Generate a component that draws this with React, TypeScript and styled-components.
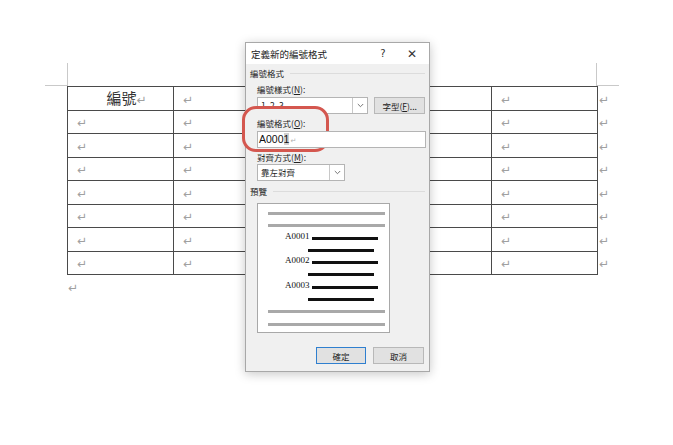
import React from "react";
import styled, { createGlobalStyle } from "styled-components";

const Global = createGlobalStyle`
  html, body { margin: 0; padding: 0; background: #ffffff; }
  body { width: 673px; height: 445px; overflow: hidden; font-family: "Noto Sans CJK TC", "Noto Sans", sans-serif; }
`;

const Page = styled.div`
  position: relative;
  width: 673px;
  height: 445px;
  background: #ffffff;
  padding-top: 63px;
  box-sizing: border-box;
`;

const MarkRow = styled.div`
  display: flex;
  height: 23px;
  margin-left: 45px;
`;

const MarkSide = styled.div`
  width: 22px;
  border-bottom: 1px solid #c9c9c9;
  box-sizing: border-box;
`;

const MarkMid = styled.div`
  width: 530px;
  border-left: 1px solid #c9c9c9;
  border-right: 1px solid #c9c9c9;
  box-sizing: border-box;
`;

const Table = styled.table`
  margin-left: 67px;
  border-collapse: collapse;
  table-layout: fixed;
  width: 540px;
`;

const Row = styled.tr`
  height: 23.5px;
`;

const Cell = styled.td<{ $center?: boolean }>`
  border: 1px solid #4a4a4a;
  padding: 0 0 0 ${(p) => (p.$center ? 12 : 9)}px;
  text-align: ${(p) => (p.$center ? "center" : "left")};
  vertical-align: middle;
  line-height: 14px;
`;

const EndCell = styled.td`
  border: none;
  padding: 0 0 0 1px;
  vertical-align: middle;
  line-height: 14px;
`;

const Mark = styled.span`
  color: #a0a0a0;
  font-family: "DejaVu Sans", sans-serif;
  font-size: 12px;
`;

const HeadText = styled.span`
  font-family: "Noto Sans CJK TC", sans-serif;
  font-weight: 400;
  font-size: 15px;
  color: #333;
`;

const AfterPara = styled.div`
  margin-left: 68px;
  margin-top: 3px;
  line-height: 14px;
`;

const Dialog = styled.div`
  position: absolute;
  left: 245px;
  top: 42px;
  width: 185px;
  height: 330px;
  box-sizing: border-box;
  background: #f0f0f0;
  border: 1px solid #a8a8a8;
  box-shadow: 0 2px 10px rgba(0, 0, 0, 0.22);
  display: flex;
  flex-direction: column;
  font-family: "Noto Sans CJK TC", "Noto Sans", sans-serif;
  color: #222;
`;

const TitleBar = styled.div`
  height: 21px;
  background: #ffffff;
  display: flex;
  align-items: center;
  padding-left: 5px;
  padding-right: 9px;
  font-size: 9.5px;
  flex-shrink: 0;
`;

const TitleText = styled.span`
  flex: 1;
`;

const TitleBtn = styled.span<{ $w: number; $size: number }>`
  width: ${(p) => p.$w}px;
  text-align: center;
  font-family: "DejaVu Sans", sans-serif;
  font-size: ${(p) => p.$size}px;
  color: #333;
`;

const TitleGap = styled.span`
  width: 13px;
`;

const Body = styled.div`
  display: flex;
  flex-direction: column;
  padding: 0 4px 0 4px;
  position: relative;
`;

const GroupLabel = styled.div<{ $mt: number }>`
  display: flex;
  align-items: center;
  gap: 6px;
  height: 12px;
  margin-top: ${(p) => p.$mt}px;
  font-size: 8.5px;
  &::after {
    content: "";
    flex: 1;
    border-top: 1px solid #dcdcdc;
  }
`;

const Indent = styled.div`
  padding-left: 7px;
  display: flex;
  flex-direction: column;
`;

const FieldLabel = styled.div<{ $mt: number; $top?: boolean }>`
  height: 12px;
  line-height: 12px;
  margin-top: ${(p) => p.$mt}px;
  font-size: 8.5px;
  position: ${(p) => (p.$top ? "relative" : "static")};
  z-index: ${(p) => (p.$top ? 3 : "auto")};
  u { text-decoration: underline; }
`;

const FieldRow = styled.div<{ $mt: number }>`
  display: flex;
  gap: 6px;
  margin-top: ${(p) => p.$mt}px;
  height: 17px;
`;

const Select = styled.div<{ $w: number }>`
  width: ${(p) => p.$w}px;
  height: 17px;
  box-sizing: border-box;
  display: flex;
  background: #ffffff;
  border: 1px solid #b4b4b4;
`;

const SelectText = styled.div`
  flex: 1;
  font-size: 8.5px;
  line-height: 15px;
  padding-left: 3px;
  font-family: "Noto Sans CJK TC", sans-serif;
`;

const SelectArrow = styled.div`
  width: 14px;
  border-left: 1px solid #c8c8c8;
  display: flex;
  align-items: center;
  justify-content: center;
`;

const Button = styled.div<{ $w: number; $focus?: boolean }>`
  width: ${(p) => p.$w}px;
  height: 17px;
  box-sizing: border-box;
  background: #e1e1e1;
  border: 1px solid ${(p) => (p.$focus ? "#2f7fcf" : "#b8b8b8")};
  font-size: 8.5px;
  display: flex;
  align-items: center;
  justify-content: center;
`;

const Input = styled.div`
  position: relative;
  z-index: 3;
  margin-top: 2px;
  height: 17px;
  width: 169px;
  box-sizing: border-box;
  background: #ffffff;
  border: 1px solid #b4b4b4;
  font-family: "Liberation Sans", sans-serif;
  font-size: 10.5px;
  line-height: 15px;
  padding-left: 1px;
  color: #111;
`;

const Caret = styled.span`
  background: #d0d0d0;
`;

const InputMark = styled.span`
  color: #b0b0b0;
  font-family: "DejaVu Sans", sans-serif;
  font-size: 7px;
  margin-left: 1px;
`;

const Highlight = styled.div`
  position: absolute;
  left: -4px;
  top: 42px;
  width: 87px;
  height: 46px;
  box-sizing: border-box;
  border: 3px solid #d4574f;
  border-radius: 14px;
  background: #f0f0f0;
  z-index: 2;
`;

const Preview = styled.div`
  margin-top: 6px;
  width: 133px;
  height: 130px;
  box-sizing: border-box;
  background: #ffffff;
  border: 1px solid #a8a8a8;
  display: flex;
  flex-direction: column;
  padding: 0 0 0 10px;
`;

const GrayLine = styled.div<{ $mt: number }>`
  width: 117px;
  height: 3px;
  flex-shrink: 0;
  background: #a9a9a9;
  margin-top: ${(p) => p.$mt}px;
`;

const Entry = styled.div`
  display: flex;
  align-items: center;
  margin-top: 9.3px;
  padding-left: 17px;
  height: 3px;
  flex-shrink: 0;
`;

const EntryNum = styled.span`
  font-family: "Liberation Serif", serif;
  font-size: 9px;
  line-height: 3px;
  width: 27px;
  color: #111;
  transform: translateY(-2px);
`;

const BlackLine = styled.div`
  width: 66px;
  height: 3px;
  background: #111;
`;

const SubLine = styled.div`
  width: 66px;
  height: 3px;
  flex-shrink: 0;
  background: #111;
  margin-left: 40px;
  margin-top: 9.3px;
`;

const Footer = styled.div`
  display: flex;
  justify-content: flex-end;
  gap: 7px;
  margin-top: 14px;
  padding-right: 1px;
`;

const Chevron = () => (
  <svg width="7" height="5" viewBox="0 0 7 5">
    <path d="M0.8 1 L3.5 3.7 L6.2 1" fill="none" stroke="#666" strokeWidth="0.9" />
  </svg>
);

const ROWS = 8;

export default function App() {
  return (
    <Page>
      <Global />
      <MarkRow>
        <MarkSide />
        <MarkMid />
        <MarkSide />
      </MarkRow>
      <Table>
        <colgroup>
          <col style={{ width: 106 }} />
          <col style={{ width: 106 }} />
          <col style={{ width: 106 }} />
          <col style={{ width: 106 }} />
          <col style={{ width: 106 }} />
          <col style={{ width: 10 }} />
        </colgroup>
        <tbody>
          {Array.from({ length: ROWS }).map((_, r) => (
            <Row key={r}>
              {r === 0 ? (
                <Cell $center>
                  <HeadText>編號</HeadText>
                  <Mark>↵</Mark>
                </Cell>
              ) : (
                <Cell>
                  <Mark>↵</Mark>
                </Cell>
              )}
              <Cell>
                <Mark>↵</Mark>
              </Cell>
              <Cell>
                <Mark>↵</Mark>
              </Cell>
              <Cell>
                <Mark>↵</Mark>
              </Cell>
              <Cell>
                <Mark>↵</Mark>
              </Cell>
              <EndCell>
                <Mark>↵</Mark>
              </EndCell>
            </Row>
          ))}
        </tbody>
      </Table>
      <AfterPara>
        <Mark>↵</Mark>
      </AfterPara>

      <Dialog>
        <TitleBar>
          <TitleText>定義新的編號格式</TitleText>
          <TitleBtn $w={16} $size={10}>?</TitleBtn>
          <TitleGap />
          <TitleBtn $w={16} $size={12}>✕</TitleBtn>
        </TitleBar>
        <Body>
          <GroupLabel $mt={3}>編號格式</GroupLabel>
          <Indent>
            <FieldLabel $mt={4}>
              編號樣式(<u>N</u>):
            </FieldLabel>
            <FieldRow $mt={2}>
              <Select $w={112}>
                <SelectText>1, 2, 3, ...</SelectText>
                <SelectArrow>
                  <Chevron />
                </SelectArrow>
              </Select>
              <Button $w={51}>
                字型(<u>F</u>)...
              </Button>
            </FieldRow>
            <FieldLabel $mt={3} $top>
              編號格式(<u>O</u>):
            </FieldLabel>
            <Input>
              A000<Caret>1</Caret>
              <InputMark>↵</InputMark>
            </Input>
            <FieldLabel $mt={3}>
              對齊方式(<u>M</u>):
            </FieldLabel>
            <FieldRow $mt={1}>
              <Select $w={88}>
                <SelectText>靠左對齊</SelectText>
                <SelectArrow>
                  <Chevron />
                </SelectArrow>
              </Select>
            </FieldRow>
          </Indent>
          <GroupLabel $mt={4}>預覽</GroupLabel>
          <Indent>
            <Preview>
              <GrayLine $mt={8} />
              <GrayLine $mt={9.3} />
              {["A0001", "A0002", "A0003"].map((n) => (
                <React.Fragment key={n}>
                  <Entry>
                    <EntryNum>{n}</EntryNum>
                    <BlackLine />
                  </Entry>
                  <SubLine />
                </React.Fragment>
              ))}
              <GrayLine $mt={9.3} />
              <GrayLine $mt={9.3} />
            </Preview>
            <Footer>
              <Button $w={50} $focus>
                確定
              </Button>
              <Button $w={51}>取消</Button>
            </Footer>
          </Indent>
          <Highlight />
        </Body>
      </Dialog>
    </Page>
  );
}
